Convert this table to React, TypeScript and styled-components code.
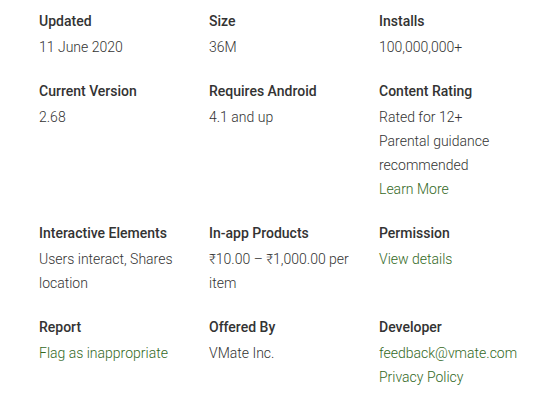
import styled, { createGlobalStyle } from 'styled-components'

const GlobalStyle = createGlobalStyle`
  body {
    margin: 0;
    background: #fff;
    font-family: Roboto, Arial, sans-serif;
  }
`

const InfoGrid = styled.div`
  display: grid;
  grid-template-columns: repeat(3, 170px);
  row-gap: 20px;
  padding: 9px 0 0 39px;
`

const InfoItem = styled.div`
  padding-right: 20px;
`

const Label = styled.div`
  font-size: 14px;
  line-height: 24px;
  font-weight: 500;
  color: #333;
  margin-bottom: 2px;
`

const Value = styled.div`
  font-size: 14px;
  line-height: 24px;
  font-weight: 300;
  color: #333;
`

const Link = styled.a`
  display: block;
  font-size: 14px;
  line-height: 24px;
  font-weight: 300;
  color: #33691e;
  text-decoration: none;
`

type Line = { text: string; link?: boolean }

const items: { label: string; lines: Line[] }[] = [
  { label: 'Updated', lines: [{ text: '11 June 2020' }] },
  { label: 'Size', lines: [{ text: '36M' }] },
  { label: 'Installs', lines: [{ text: '100,000,000+' }] },
  { label: 'Current Version', lines: [{ text: '2.68' }] },
  { label: 'Requires Android', lines: [{ text: '4.1 and up' }] },
  {
    label: 'Content Rating',
    lines: [
      { text: 'Rated for 12+' },
      { text: 'Parental guidance recommended' },
      { text: 'Learn More', link: true },
    ],
  },
  { label: 'Interactive Elements', lines: [{ text: 'Users interact, Shares location' }] },
  { label: 'In-app Products', lines: [{ text: '₹10.00 – ₹1,000.00 per item' }] },
  { label: 'Permission', lines: [{ text: 'View details', link: true }] },
  { label: 'Report', lines: [{ text: 'Flag as inappropriate', link: true }] },
  { label: 'Offered By', lines: [{ text: 'VMate Inc.' }] },
  {
    label: 'Developer',
    lines: [
      { text: 'feedback@vmate.com', link: true },
      { text: 'Privacy Policy', link: true },
    ],
  },
]

const App = () => {
  return (
    <>
      <GlobalStyle />
      <InfoGrid>
        {items.map((item) => (
          <InfoItem key={item.label}>
            <Label>{item.label}</Label>
            {item.lines.map((line) =>
              line.link ? (
                <Link key={line.text} href="#">
                  {line.text}
                </Link>
              ) : (
                <Value key={line.text}>{line.text}</Value>
              )
            )}
          </InfoItem>
        ))}
      </InfoGrid>
    </>
  )
}

export default App
